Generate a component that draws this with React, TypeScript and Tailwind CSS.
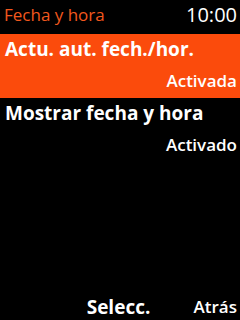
export default function App() {
  return (
    <div className="w-[240px] h-[320px] bg-black flex flex-col font-['Open_Sans',sans-serif] text-white overflow-hidden">
      <div className="h-[34px] flex items-center justify-between pl-[4px] pr-[3px] pb-[4px]">
        <span className="text-[#f2581e] text-[17px]">Fecha y hora</span>
        <span className="text-[20px] leading-[24px]">10:00</span>
      </div>
      <div className="h-[64px] bg-[#fb4b0c] flex flex-col px-[5px]">
        <div className="text-[19px] font-bold leading-[26px] pt-[2px]">Actu. aut. fech./hor.</div>
        <div className="text-[17px] font-semibold text-right leading-[22px] mt-[8px] -mr-[2px]">Activada</div>
      </div>
      <div className="flex flex-col px-[5px]">
        <div className="text-[19px] font-bold leading-[26px] pt-[2px]">Mostrar fecha y hora</div>
        <div className="text-[17px] font-semibold text-right leading-[22px] mt-[8px] -mr-[2px]">Activado</div>
      </div>
      <div className="mt-auto h-[26px] flex items-center">
        <span className="flex-1" />
        <span className="text-[19px] font-bold">Selecc.</span>
        <span className="flex-1 text-right text-[17px] font-semibold pr-[3px]">Atrás</span>
      </div>
    </div>
  )
}
